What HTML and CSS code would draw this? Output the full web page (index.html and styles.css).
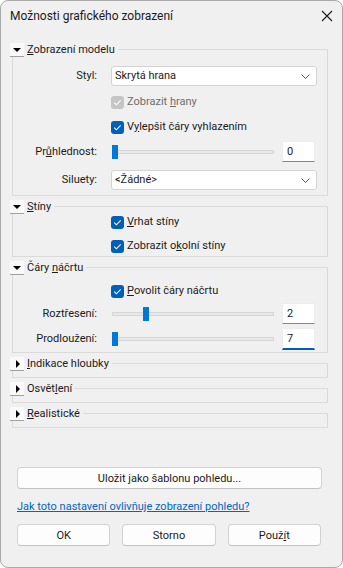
FILE: index.html
```html
<!DOCTYPE html>
<html lang="cs">
<head>
    <meta charset="UTF-8">
    <meta name="viewport" content="width=device-width, initial-scale=1.0">
    <title>Možnosti grafického zobrazení</title>
    <link rel="stylesheet" href="styles.css">
</head>
<body>
    <div class="dialog">
        <div class="titlebar">
            <span class="title">Možnosti grafického zobrazení</span>
            <svg class="close" width="12" height="12" viewBox="0 0 12 12">
                <path d="M1 1L11 11M11 1L1 11" stroke="#1a1a1a" stroke-width="1.1" fill="none"/>
            </svg>
        </div>

        <div class="content">
            <!-- Zobrazeni modelu -->
            <section class="group">
                <div class="group-head">
                    <span class="toggle open"></span>
                    <span class="group-title"><u>Z</u>obrazení modelu</span>
                    <span class="rule"></span>
                </div>
                <div class="group-body model-body">
                    <div class="form-row row-style">
                        <span class="field-label">Styl:</span>
                        <div class="combo">
                            <span>Skrytá hrana</span>
                            <svg width="9" height="5" viewBox="0 0 9 5"><path d="M0.5 0.5L4.5 4.5L8.5 0.5" stroke="#555" fill="none"/></svg>
                        </div>
                    </div>
                    <div class="check-row disabled row-edges">
                        <span class="checkbox"><svg width="13" height="13" viewBox="0 0 13 13"><path d="M3.3 6.7L5.4 8.8L9.7 4.4" stroke="#fff" stroke-width="1.1" fill="none"/></svg></span>
                        <span>Zobrazit <u>h</u>rany</span>
                    </div>
                    <div class="check-row row-smooth">
                        <span class="checkbox"><svg width="13" height="13" viewBox="0 0 13 13"><path d="M3.3 6.7L5.4 8.8L9.7 4.4" stroke="#fff" stroke-width="1.1" fill="none"/></svg></span>
                        <span>V<u>y</u>lepšit čáry vyhlazením</span>
                    </div>
                    <div class="slider-row row-opacity">
                        <span class="field-label">Pr<u>ů</u>hlednost:</span>
                        <div class="slider">
                            <span class="track"></span>
                            <span class="thumb" style="left: 0px"></span>
                        </div>
                        <span class="edit">0</span>
                    </div>
                    <div class="form-row row-silhouette">
                        <span class="field-label">Siluety:</span>
                        <div class="combo">
                            <span>&lt;Žádné&gt;</span>
                            <svg width="9" height="5" viewBox="0 0 9 5"><path d="M0.5 0.5L4.5 4.5L8.5 0.5" stroke="#555" fill="none"/></svg>
                        </div>
                    </div>
                </div>
            </section>

            <!-- Stiny -->
            <section class="group">
                <div class="group-head">
                    <span class="toggle open"></span>
                    <span class="group-title"><u>S</u>tíny</span>
                    <span class="rule"></span>
                </div>
                <div class="group-body shadow-body">
                    <div class="check-row">
                        <span class="checkbox"><svg width="13" height="13" viewBox="0 0 13 13"><path d="M3.3 6.7L5.4 8.8L9.7 4.4" stroke="#fff" stroke-width="1.1" fill="none"/></svg></span>
                        <span><u>V</u>rhat stíny</span>
                    </div>
                    <div class="check-row row-ambient">
                        <span class="checkbox"><svg width="13" height="13" viewBox="0 0 13 13"><path d="M3.3 6.7L5.4 8.8L9.7 4.4" stroke="#fff" stroke-width="1.1" fill="none"/></svg></span>
                        <span>Zobrazit o<u>k</u>olní stíny</span>
                    </div>
                </div>
            </section>

            <!-- Cary nacrtu -->
            <section class="group">
                <div class="group-head">
                    <span class="toggle open"></span>
                    <span class="group-title">Čáry <u>n</u>áčrtu</span>
                    <span class="rule"></span>
                </div>
                <div class="group-body sketch-body">
                    <div class="check-row row-sketch">
                        <span class="checkbox"><svg width="13" height="13" viewBox="0 0 13 13"><path d="M3.3 6.7L5.4 8.8L9.7 4.4" stroke="#fff" stroke-width="1.1" fill="none"/></svg></span>
                        <span><u>P</u>ovolit čáry náčrtu</span>
                    </div>
                    <div class="slider-row row-jitter">
                        <span class="field-label">Roztřesení:</span>
                        <div class="slider">
                            <span class="track"></span>
                            <span class="thumb" style="left: 31px"></span>
                        </div>
                        <span class="edit">2</span>
                    </div>
                    <div class="slider-row row-extend">
                        <span class="field-label">Prodloužení:</span>
                        <div class="slider">
                            <span class="track"></span>
                            <span class="thumb" style="left: 0px"></span>
                        </div>
                        <span class="edit focused">7</span>
                    </div>
                </div>
            </section>

            <!-- collapsed -->
            <section class="group">
                <div class="group-head">
                    <span class="toggle"></span>
                    <span class="group-title"><u>I</u>ndikace hloubky</span>
                    <span class="rule"></span>
                </div>
                <div class="group-body collapsed"></div>
            </section>
            <section class="group">
                <div class="group-head">
                    <span class="toggle"></span>
                    <span class="group-title">Osvět<u>l</u>ení</span>
                    <span class="rule"></span>
                </div>
                <div class="group-body collapsed"></div>
            </section>
            <section class="group">
                <div class="group-head">
                    <span class="toggle"></span>
                    <span class="group-title"><u>R</u>ealistické</span>
                    <span class="rule"></span>
                </div>
                <div class="group-body collapsed"></div>
            </section>
        </div>

        <div class="footer">
            <button class="btn wide">Uložit jako šablonu pohledu...</button>
            <a class="help-link" href="#">Jak toto nastavení ovlivňuje zobrazení pohledu?</a>
            <div class="buttons">
                <button class="btn">OK</button>
                <button class="btn">Storno</button>
                <button class="btn">Použ<u>í</u>t</button>
            </div>
        </div>
    </div>
</body>
</html>
```

FILE: styles.css
```css
body {
    margin: 0;
    background: #ffffff;
    font-family: Roboto, "Noto Sans", sans-serif;
    font-size: 11px;
    line-height: 16px;
    color: #1b1b1b;
}
.dialog {
    width: 343px;
    height: 568px;
    box-sizing: border-box;
    border: 1px solid #a9a9a9;
    border-radius: 8px;
    background: #f0f0f0;
    display: flex;
    flex-direction: column;
    overflow: hidden;
}
.titlebar {
    height: 29px;
    display: flex;
    align-items: center;
    justify-content: space-between;
    padding: 0 9px 0 9px;
}
.title {
    font-size: 12px;
}
.close {
    margin-top: 1px;
}
.content {
    padding: 13px 14px 0 9px;
}

/* groups */
.group {
    margin-top: 4px;
}
.group:first-child {
    margin-top: 0;
}
.group-head {
    display: flex;
    height: 14px;
    align-items: stretch;
}
.toggle {
    width: 14px;
    height: 14px;
    box-sizing: border-box;
    background: #f9f9f9;
    border-bottom: 1px solid #a0a0a0;
    display: flex;
    align-items: center;
    justify-content: center;
}
.toggle::after {
    content: "";
    width: 0;
    height: 0;
    border-left: 4px solid transparent;
    border-right: 4px solid transparent;
    border-top: 4px solid #000;
    margin-top: 1px;
}
.toggle:not(.open)::after {
    border-top: 4px solid transparent;
    border-bottom: 4px solid transparent;
    border-left: 4px solid #000;
    border-right: 0;
    margin-left: 2px;
}
.group-title {
    margin-left: 3px;
    line-height: 14px;
    white-space: nowrap;
}
.rule {
    flex: 1;
    margin-top: 6px;
    margin-left: 3px;
    border-top: 1px solid #dadada;
    border-right: 1px solid #dadada;
}
.group-body {
    margin-left: 2px;
    border: 1px solid #dadada;
    border-top: none;
}
.model-body {
    padding: 9px 0 5px 0;
}
.shadow-body {
    padding: 0 0 2px 0;
}
.sketch-body {
    padding: 8px 0 2px 0;
}
.collapsed {
    height: 6px;
}

/* rows */
.form-row,
.slider-row {
    display: flex;
    align-items: center;
}
.field-label {
    width: 84px;
    text-align: right;
    flex-shrink: 0;
}
.form-row .field-label {
    margin-right: 14px;
}
.slider-row .field-label {
    margin-right: 15px;
}
.check-row {
    display: flex;
    align-items: center;
    height: 16px;
    padding-left: 98px;
}
.row-edges {
    margin-top: 8px;
}
.row-smooth {
    margin-top: 9px;
}
.row-opacity {
    margin-top: 6px;
    padding-right: 12px;
}
.row-silhouette {
    margin-top: 8px;
    padding-right: 10px;
}
.row-style {
    padding-right: 10px;
}
.row-ambient {
    margin-top: 8px;
}
.row-jitter {
    margin-top: 4px;
    padding-right: 12px;
}
.row-extend {
    margin-top: 4px;
    padding-right: 12px;
}
.checkbox {
    width: 13px;
    height: 13px;
    border-radius: 3px;
    background: #005fb8;
    margin-right: 3px;
    display: flex;
}
.disabled {
    color: #6d6d6d;
}
.disabled .checkbox {
    background: #c5c5c5;
}

/* combo */
.combo {
    flex: 1;
    height: 20px;
    box-sizing: border-box;
    background: #ffffff;
    border: 1px solid #d3d3d3;
    border-radius: 3px;
    padding: 0 6px 0 3px;
    display: flex;
    align-items: center;
    justify-content: space-between;
}

/* slider */
.slider {
    flex: 1;
    position: relative;
    height: 14px;
    display: flex;
    align-items: center;
    margin-right: 8px;
}
.track {
    flex: 1;
    height: 4px;
    box-sizing: border-box;
    background: #e9e9e9;
    border: 1px solid #d6d6d6;
}
.thumb {
    position: absolute;
    top: 0;
    width: 6px;
    height: 14px;
    background: #0078d7;
}
.edit {
    width: 33px;
    height: 21px;
    box-sizing: border-box;
    background: #ffffff;
    border: 1px solid #ededed;
    border-bottom: 1px solid #868686;
    padding-left: 4px;
    line-height: 19px;
    flex-shrink: 0;
}
.edit.focused {
    height: 22px;
    border-bottom: 2px solid #005fb8;
}

/* footer */
.footer {
    margin-top: auto;
    padding: 0 21px 21px 16px;
    display: flex;
    flex-direction: column;
}
.btn {
    height: 22px;
    box-sizing: border-box;
    background: #fdfdfd;
    border: 1px solid #d2d2d2;
    border-bottom-color: #c2c2c2;
    border-radius: 4px;
    font-family: inherit;
    font-size: 11px;
    color: #1b1b1b;
    padding: 0;
}
.btn.wide {
    width: 305px;
}
.help-link {
    margin-top: 10px;
    color: #0067c0;
    text-decoration: underline;
}
.buttons {
    margin-top: 9px;
    display: flex;
    gap: 12px;
}
.buttons .btn {
    width: 94px;
}
```
